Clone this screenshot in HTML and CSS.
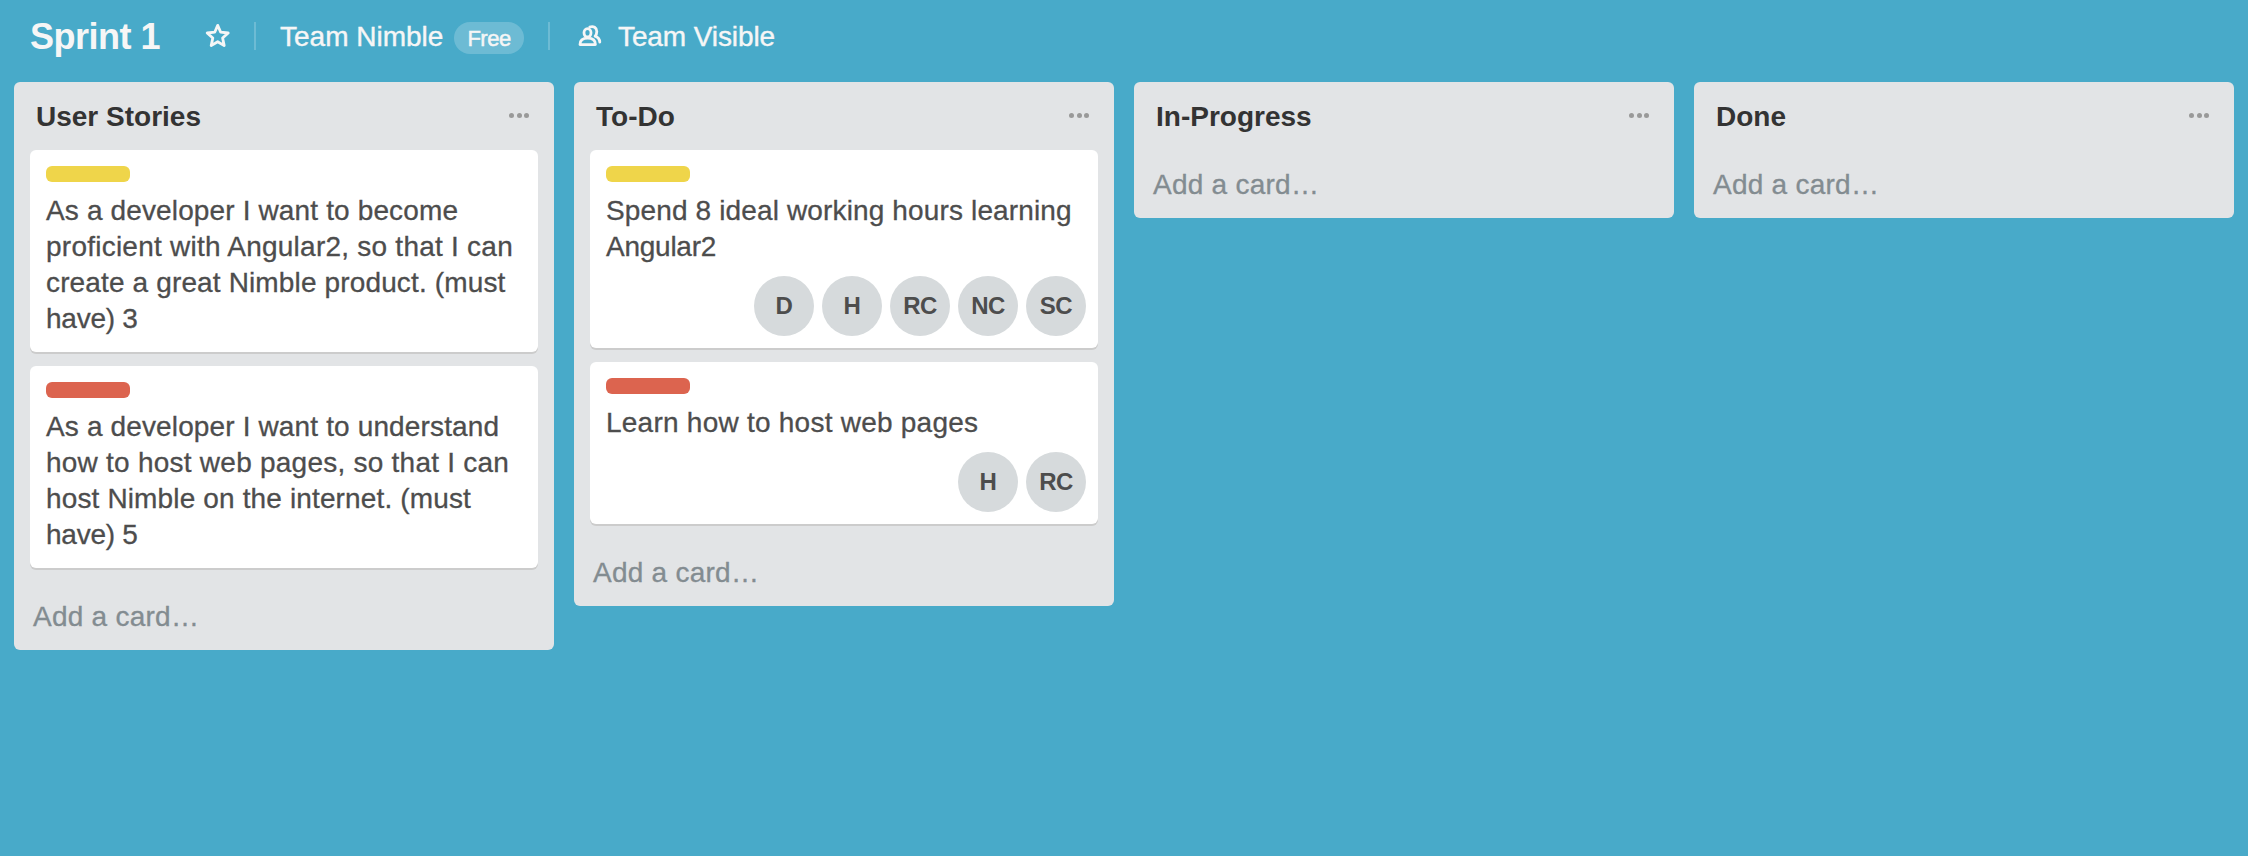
FILE: index.html
```html
<!DOCTYPE html>
<html lang="en">
<head>
<meta charset="utf-8">
<title>Sprint 1</title>
<link rel="stylesheet" href="styles.css">
</head>
<body>
<header class="board-header">
  <h1 class="board-name">Sprint 1</h1>
  <svg class="icon star" viewBox="0 0 28 28"><path d="M14.700 3.400l3 6.800 7.500.8-5.600 5 1.600 7.600-6.500-3.900-6.500 3.900 1.600-7.600-5.600-5 7.500-.8z"/></svg>
  <span class="divider"></span>
  <span class="org-name">Team Nimble</span>
  <span class="plan">Free</span>
  <span class="divider"></span>
  <svg class="icon people" viewBox="0 0 28 28"><ellipse cx="12.500" cy="10.800" rx="3.500" ry="4.200"/><path d="M5 22.600c0-4.300 3-6.400 7.700-6.400s7.700 2.100 7.700 6.400z"/><path d="M14.800 5.100c3.500-1.600 7 .6 7 4.300 0 2-.6 3.400-1.700 4.700 2.900 1 4.500 2.700 4.700 6"/></svg>
  <span class="visibility">Team Visible</span>
</header>
<main class="board">
  <section class="list">
    <div class="list-header"><h2 class="list-title">User Stories</h2><span class="menu"><i></i><i></i><i></i></span></div>
    <div class="cards">
      <article class="card"><span class="label yellow"></span><p class="card-text">As a developer I want to become<br><span class="loose">proficient with Angular2, so that I can</span><br>create a great Nimble product. (must<br><span class="tight">have) 3</span></p></article>
      <article class="card"><span class="label red"></span><p class="card-text">As a developer I want to understand<br><span class="loose">how to host web pages, so that I can</span><br>host Nimble on the internet. (must<br><span class="tight">have) 5</span></p></article>
    </div>
    <a class="add-card">Add a card…</a>
  </section>
  <section class="list">
    <div class="list-header"><h2 class="list-title">To-Do</h2><span class="menu"><i></i><i></i><i></i></span></div>
    <div class="cards">
      <article class="card"><span class="label yellow"></span><p class="card-text">Spend 8 ideal working hours learning<br><span class="tight">Angular2</span></p>
        <div class="members"><span class="member">D</span><span class="member">H</span><span class="member">RC</span><span class="member">NC</span><span class="member">SC</span></div></article>
      <article class="card"><span class="label red"></span><p class="card-text"><span class="loose">Learn how to host web pages</span></p>
        <div class="members"><span class="member">H</span><span class="member">RC</span></div></article>
    </div>
    <a class="add-card">Add a card…</a>
  </section>
  <section class="list">
    <div class="list-header"><h2 class="list-title">In-Progress</h2><span class="menu"><i></i><i></i><i></i></span></div>
    <a class="add-card">Add a card…</a>
  </section>
  <section class="list">
    <div class="list-header"><h2 class="list-title">Done</h2><span class="menu"><i></i><i></i><i></i></span></div>
    <a class="add-card">Add a card…</a>
  </section>
</main>
</body>
</html>
```
FILE: styles.css
```css
* { box-sizing: border-box; }
body {
  margin: 0;
  min-height: 100vh;
  background: #48aac9;
  color: #4d4d4d;
  font: 28px/36px "Helvetica Neue", "Liberation Sans", Arial, sans-serif;
  white-space: nowrap;
}
.board-header {
  display: flex;
  align-items: flex-start;
  height: 82px;
  padding: 18px 30px 0;
  color: #f6f6f6;
}
.board-name { margin: 0; width: 173px; font-size: 36px; line-height: 38px; letter-spacing: -0.5px; }
.icon { width: 28px; height: 28px; margin-top: 4px; fill: none; stroke: #f6f6f6; stroke-width: 2.8; stroke-linejoin: round; stroke-linecap: round; }
.divider { width: 2px; height: 28px; margin-top: 4px; background: #6dbbd4; }
.star { margin-right: 23px; }
.org-name, .visibility { padding-top: 1px; -webkit-text-stroke: 0.4px; }
.org-name { width: 174px; margin-left: 24px; }
.plan { width: 70px; height: 32px; margin: 4px 24px 0 0; border-radius: 16px; background: #6dbbd4; font-size: 22px; line-height: 33px; text-align: center; letter-spacing: -0.5px; -webkit-text-stroke: 0.5px; }
.people { margin-left: 25px; }
.visibility { margin-left: 15px; letter-spacing: -0.1px; }

.board { display: flex; align-items: flex-start; gap: 20px; padding: 0 14px; }
.list { flex: 0 0 540px; padding: 16px 16px 15px; border-radius: 6px; background: #e2e4e6; }
.list-header { display: flex; justify-content: space-between; height: 52px; padding: 0 9px 0 6px; }
.list-title { margin: 1px 0 0; color: #333; font-size: 28px; line-height: 36px; }
.menu { display: flex; gap: 2.5px; padding-top: 15px; }
.menu i { width: 5px; height: 5px; border-radius: 50%; background: #999; }
.cards { display: flex; flex-direction: column; gap: 14px; margin-bottom: 14px; }
.card { padding: 16px 12px 12px 16px; border-radius: 6px; background: #fff; box-shadow: 0 2px 0 #ccc; }
.label { display: block; width: 84px; height: 16px; margin-bottom: 11px; border-radius: 6px; }
.yellow { background: #efd54a; }
.red { background: #dc644f; }
.card-text { margin: 0 0 3px; letter-spacing: 0.14px; -webkit-text-stroke: 0.3px; }
.loose { letter-spacing: 0.24px; }
.tight { letter-spacing: -0.25px; }
.members { display: flex; justify-content: flex-end; gap: 8px; padding-top: 9px; }
.card-text + .members { margin-top: -1px; }
.member { width: 60px; height: 60px; border-radius: 50%; background: #d6dadc; font-size: 24px; font-weight: 700; line-height: 60px; text-align: center; letter-spacing: -0.5px; }
.add-card { display: block; padding: 17px 0 0 3px; color: #838c91; letter-spacing: 0.25px; -webkit-text-stroke: 0.3px; }
```
